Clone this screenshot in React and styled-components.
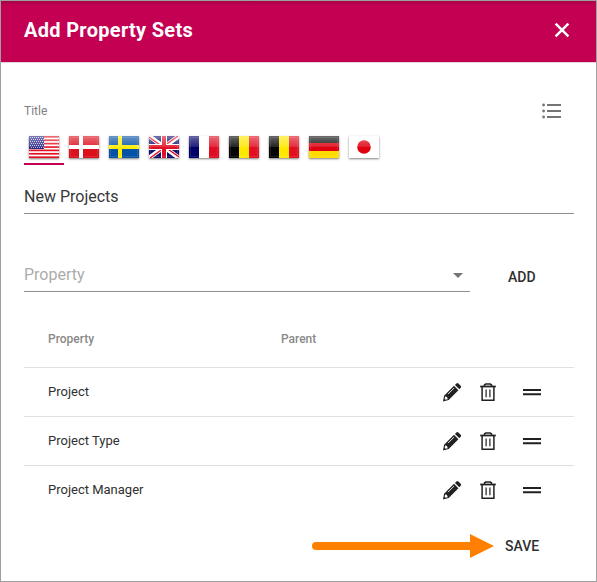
import React from "react";
import styled, { createGlobalStyle } from "styled-components";

const GlobalStyle = createGlobalStyle`
  * { box-sizing: border-box; }
  body { margin: 0; background: #fff; font-family: Roboto, "Liberation Sans", sans-serif; color: #303030; }
  svg { display: block; flex: none; }
  button { border: 0; padding: 0; background: none; color: inherit; font-family: inherit; }
`;

const Dialog = styled.section`
  width: 597px;
  height: 582px;
  border: 1px solid #a0a0a0;
  background: #fff;
  display: flex;
  flex-direction: column;
`;

const Header = styled.header`
  height: 62px;
  flex: none;
  display: flex;
  align-items: center;
  justify-content: space-between;
  padding: 0 26px 3px 23px;
  color: #fff;
  background: linear-gradient(#a80447 0, #c40052 5px);
  border-bottom: 1px solid #e2d6db;
`;

const Heading = styled.h1`
  margin: 0;
  font-size: 20px;
  line-height: 24px;
  font-weight: 700;
  letter-spacing: 0.3px;
`;

const Body = styled.main`
  flex: 1;
  padding: 38px 22px 0 23px;
`;

const LabelRow = styled.div`
  height: 20px;
  display: flex;
  align-items: center;
  justify-content: space-between;
  padding-right: 13px;
`;

const Label = styled.span`
  font-size: 12px;
  line-height: 20px;
  color: #808080;
  font-weight: 400;
`;

const ColumnLabel = styled(Label)`
  line-height: 22px;
  font-weight: 500;
  color: #8a8a8a;
`;

const Tabs = styled.div`
  height: 44px;
  display: flex;
`;

const FlagTab = styled.button`
  width: 40px;
  height: 44px;
  display: flex;
  justify-content: center;
  padding-top: 15px;
  border-bottom: 2px solid ${(p) => (p.$active ? "#c40052" : "transparent")};
`;

const FlagFrame = styled.span`
  width: 30px;
  height: 22px;
  box-shadow: 0 1px 2px rgba(0, 0, 0, 0.5);
`;

const TitleInput = styled.div`
  height: 49px;
  padding-top: 20px;
  font-size: 16px;
  line-height: 24px;
  color: #383838;
  border-bottom: 1px solid #8f8f8f;
`;

const AddRow = styled.div`
  display: flex;
  margin-top: 46px;
`;

const Select = styled.div`
  width: 446px;
  height: 32px;
  display: flex;
  justify-content: space-between;
  padding: 3px 7px 0 0;
  font-size: 16px;
  line-height: 24px;
  color: #acacac;
  border-bottom: 1px solid #8f8f8f;
`;

const TextButton = styled.button`
  font-size: 14px;
  line-height: 20px;
  font-weight: 500;
  color: #303030;
`;

const AddButton = styled(TextButton)`
  margin: 7px 0 0 38px;
  height: 20px;
`;

const Table = styled.div`
  margin-top: 27px;
`;

const TableRow = styled.div`
  height: 49px;
  display: grid;
  grid-template-columns: 233px 161px 38px 43px 1fr;
  align-items: center;
  padding-left: 24px;
  font-size: 13px;
  border-top: 1px solid #e0e0e0;
`;

const HeadRow = styled(TableRow)`
  height: 48px;
  padding-bottom: 8px;
  border-top: 0;
`;

const Cell = styled.span`
  grid-column: 1 / 3;
  line-height: 20px;
`;

const Footer = styled.footer`
  height: 66px;
  flex: none;
  display: flex;
  align-items: flex-start;
  padding: 19px 0 0 310px;
`;

const SaveButton = styled(TextButton)`
  margin: 2px 0 0 11px;
`;

const STRIPE = 22 / 13;

const flags = {
  us: (
    <>
      <path fill="#fff" d="M0 0h30v22H0z" />
      {[0, 2, 4, 6, 8, 10, 12].map((n) => (
        <rect key={n} fill="#e01020" y={n * STRIPE} width="30" height={STRIPE} />
      ))}
      <path fill="#292784" d="M0 0h15v13H0z" />
      {Array.from({ length: 42 }, (_, i) => {
        const row = Math.floor(i / 7);
        return <path key={i} fill="#d4d3ed" d={`M${1 + (i % 7) * 2 + (row % 2)} ${1 + row * 2}h.9v1h-.9z`} />;
      })}
    </>
  ),
  dk: (
    <>
      <path fill="#dc101d" d="M0 0h30v22H0z" />
      <path fill="#fff" d="M10 0h4v22h-4zM0 9h30v4H0z" />
    </>
  ),
  se: (
    <>
      <path fill="#0752a5" d="M0 0h30v22H0z" />
      <path fill="#ffec00" d="M9 0h4v22H9zM0 9h30v4H0z" />
    </>
  ),
  gb: (
    <>
      <path fill="#11116d" d="M0 0h30v22H0z" />
      <path stroke="#fff" strokeWidth="4.4" d="M0 0l30 22M30 0L0 22" />
      <path stroke="#df1025" strokeWidth="1.5" d="M0 1l14 10M30 21L16 11M29 0L15 10M1 22l14-10" />
      <path fill="#fff" d="M12 0h6v22h-6zM0 8h30v6H0z" />
      <path fill="#df1025" d="M13 0h4v22h-4zM0 9h30v4H0z" />
    </>
  ),
  fr: (
    <>
      <path fill="#000068" d="M0 0h10v22H0z" />
      <path fill="#fff" d="M10 0h10v22H10z" />
      <path fill="#df0c22" d="M20 0h10v22H20z" />
    </>
  ),
  be: (
    <>
      <path fill="#050505" d="M0 0h10v22H0z" />
      <path fill="#ffe900" d="M10 0h10v22H10z" />
      <path fill="#e01021" d="M20 0h10v22H20z" />
    </>
  ),
  de: (
    <>
      <path fill="#111" d="M0 0h30v7H0z" />
      <path fill="#de0010" d="M0 7h30v8H0z" />
      <path fill="#ffdc00" d="M0 15h30v7H0z" />
    </>
  ),
  jp: (
    <>
      <path fill="#fff" d="M0 0h30v22H0z" />
      <circle cx="15" cy="11" r="6.8" fill="#df0010" />
    </>
  ),
};

function Flag({ code }) {
  const id = React.useId();
  return (
    <FlagFrame>
      <svg width="30" height="22" viewBox="0 0 30 22">
        <defs>
          <linearGradient id={id} x1="0" y1="0" x2="0" y2="1">
            <stop offset="0" stopColor="#fff" stopOpacity=".38" />
            <stop offset="1" stopColor="#fff" stopOpacity=".12" />
          </linearGradient>
        </defs>
        {flags[code]}
        <path fill={`url(#${id})`} d="M0 0h30v11H0z" />
        <rect x="1.5" y="1.5" width="27" height="19" fill="none" stroke="#fff" strokeOpacity=".1" />
      </svg>
    </FlagFrame>
  );
}

const CloseIcon = () => (
  <svg width="16" height="16" viewBox="0 0 16 16" stroke="#fff" strokeWidth="2.5">
    <path d="M1.6 1.6l12.8 12.8M14.4 1.6L1.6 14.4" />
  </svg>
);

const ListIcon = () => (
  <svg width="19" height="16" viewBox="0 0 19 16" fill="#757575">
    <path d="M5 1h14v2H5zM5 7h14v2H5zM5 13h14v2H5z" />
    <circle cx="1.6" cy="2" r="1.4" />
    <circle cx="1.6" cy="8" r="1.4" />
    <circle cx="1.6" cy="14" r="1.4" />
  </svg>
);

const CaretIcon = () => (
  <svg width="10" height="24" viewBox="0 0 10 24">
    <path fill="#757575" d="M0 10h10l-5 5z" />
  </svg>
);

const PencilIcon = () => (
  <svg width="20" height="20" viewBox="0 0 20 20">
    <path fill="#212121" d="M13 2.9l1.4-1.4a1.4 1.4 0 0 1 2 0l2.3 2.3a1.4 1.4 0 0 1 0 2l-1.4 1.4zM12 3.8l4.4 4.4L6.7 18 1 19.4l1.1-5.7z" />
    <path fill="none" stroke="#fff" strokeWidth=".9" d="M6 12.1L12 6.1" />
    <path fill="#fff" d="M3.2 14.4l1.3.4.8.9.4 1.5-2.1.6-1-1z" />
  </svg>
);

const TrashIcon = () => (
  <svg width="16" height="20" viewBox="0 0 16 20" fill="none" stroke="#212121">
    <path strokeWidth="1.5" d="M4.5 4V2.9l1.2-.8h4.6l1.2.8V4M2.1 4.5v13.7h11.8V4.5" />
    <path strokeWidth="1.8" d="M.2 4.5h15.6" />
    <path strokeWidth="1.2" d="M6.1 7.5v7.8M9.9 7.5v7.8" />
  </svg>
);

const DragIcon = () => (
  <svg width="18" height="20" viewBox="0 0 18 20" fill="#212121">
    <path d="M0 7h18v2H0zM0 11.2h18v2H0z" />
  </svg>
);

const ArrowIcon = () => (
  <svg width="183" height="24" viewBox="0 0 183 24" fill="#ff8000">
    <path d="M5 8h154V0l24 12-24 12v-8H5a4 4 0 0 1 0-8z" />
  </svg>
);

const languages = ["us", "dk", "se", "gb", "fr", "be", "be", "de", "jp"];
const properties = ["Project", "Project Type", "Project Manager"];

export default function App() {
  return (
    <>
      <GlobalStyle />
      <Dialog>
        <Header>
          <Heading>Add Property Sets</Heading>
          <CloseIcon />
        </Header>
        <Body>
          <LabelRow>
            <Label>Title</Label>
            <ListIcon />
          </LabelRow>
          <Tabs>
            {languages.map((code, i) => (
              <FlagTab key={i} $active={i === 0}>
                <Flag code={code} />
              </FlagTab>
            ))}
          </Tabs>
          <TitleInput>New Projects</TitleInput>
          <AddRow>
            <Select>
              Property
              <CaretIcon />
            </Select>
            <AddButton>ADD</AddButton>
          </AddRow>
          <Table>
            <HeadRow>
              <ColumnLabel>Property</ColumnLabel>
              <ColumnLabel>Parent</ColumnLabel>
            </HeadRow>
            {properties.map((name) => (
              <TableRow key={name}>
                <Cell>{name}</Cell>
                <PencilIcon />
                <TrashIcon />
                <DragIcon />
              </TableRow>
            ))}
          </Table>
        </Body>
        <Footer>
          <ArrowIcon />
          <SaveButton>SAVE</SaveButton>
        </Footer>
      </Dialog>
    </>
  );
}
